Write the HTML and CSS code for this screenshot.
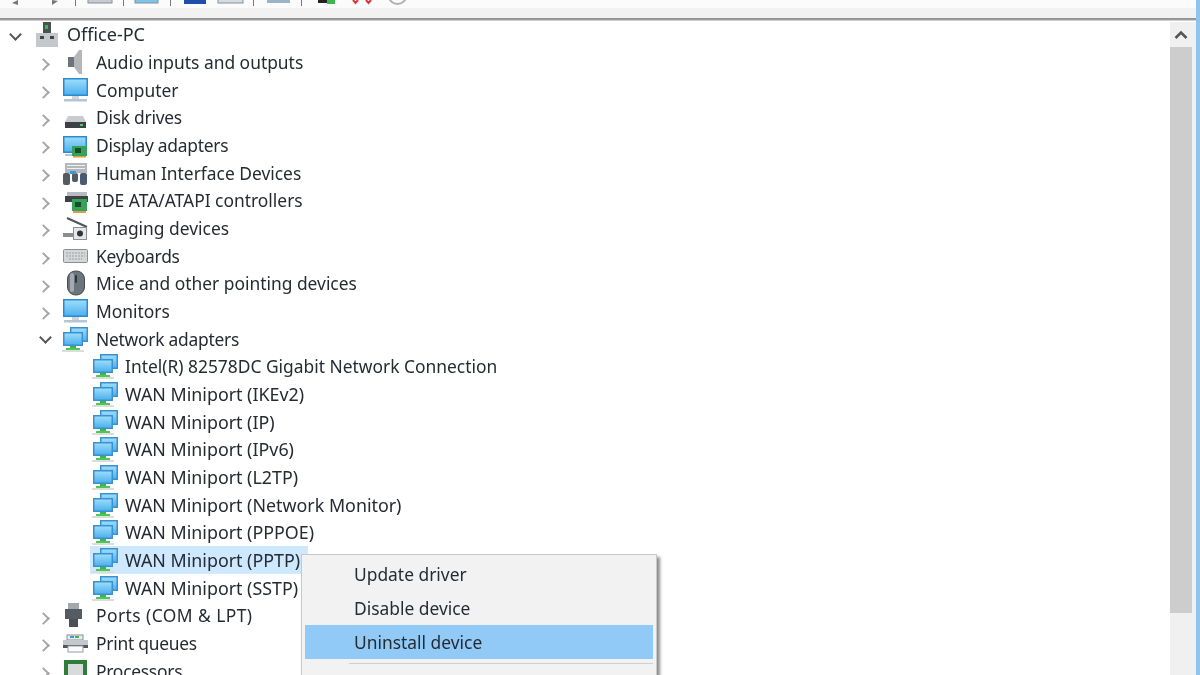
FILE: index.html
```html
<!DOCTYPE html>
<html lang="en">
<head>
<meta charset="utf-8"/>
<title>Device Manager</title>
<link rel="stylesheet" href="styles.css">
</head>
<body>
<svg class="defs" width="0" height="0">
  <defs>
    <linearGradient id="screen" x1="0" y1="0" x2="0" y2="1">
      <stop offset="0" stop-color="#9adcfa"/>
      <stop offset="1" stop-color="#4fb2ee"/>
    </linearGradient>
    <symbol id="net" viewBox="0 0 26 26">
      <rect x="8" y="1" width="18" height="15" fill="#3a90d0"/>
      <rect x="9.5" y="2.5" width="15" height="12" fill="url(#screen)"/>
      <rect x="1" y="6" width="20" height="14" fill="#3a90d0"/>
      <rect x="2.5" y="7.5" width="17" height="11" fill="url(#screen)"/>
      <rect x="8" y="20" width="6" height="2" fill="#3fb548"/>
      <rect x="4" y="22" width="14" height="2.5" fill="#4cc954"/>
      <rect x="0" y="24" width="22" height="2" fill="#dcdcdc"/>
    </symbol>
    <symbol id="monitor" viewBox="0 0 26 26">
      <rect x="1" y="1" width="25" height="18" fill="#2b8ad0"/>
      <rect x="2.5" y="2.5" width="22" height="15" fill="url(#screen)"/>
      <rect x="10" y="19" width="7" height="3" fill="#d0d4d8"/>
      <rect x="2" y="22" width="23" height="2.5" fill="#b4c6d4"/>
    </symbol>
    <symbol id="display" viewBox="0 0 26 26">
      <rect x="1" y="4" width="24" height="17" fill="#2b8ad0"/>
      <rect x="2.5" y="5.5" width="21" height="14" fill="url(#screen)"/>
      <rect x="3" y="22" width="10" height="2" fill="#b4c6d4"/>
      <rect x="10" y="14" width="15" height="10" fill="#38a058"/>
      <rect x="13" y="16" width="6" height="5" fill="#174f2a"/>
      <rect x="11" y="24" width="13" height="1.5" fill="#d8a040"/>
    </symbol>
    <symbol id="card" viewBox="0 0 26 26">
      <rect x="5" y="5" width="20" height="5" fill="#b8bcc0"/>
      <rect x="3" y="9" width="23" height="6" fill="#3c4248"/>
      <rect x="10" y="12" width="15" height="12" fill="#38a058"/>
      <rect x="13" y="15" width="6" height="5" fill="#174f2a"/>
      <rect x="11" y="24" width="13" height="2" fill="#d8a040"/>
    </symbol>
    <symbol id="print" viewBox="0 0 26 26">
      <rect x="5" y="5" width="16" height="5" fill="#e8ecef" stroke="#8a9096"/>
      <rect x="8" y="6" width="4" height="2" fill="#3a9ad8"/>
      <rect x="13" y="6" width="4" height="2" fill="#48b060"/>
      <rect x="1" y="10" width="25" height="5" fill="#c4c8cc"/>
      <rect x="1" y="15" width="25" height="3" fill="#50565c"/>
      <rect x="6" y="16" width="15" height="6" fill="#fafafa" stroke="#9aa0a6"/>
    </symbol>
  </defs>
</svg>

<div class="toolbar">
  <svg class="tool-icons" width="420" height="8" viewBox="0 0 420 8">
    <path d="M18 0 L12 3 L18 5 Z" class="arrow"/>
    <path d="M52 0 L58 1 L52 5 Z" class="arrow"/>
    <rect x="75" y="0" width="1" height="6" fill="#777"/>
    <rect x="88" y="-1" width="24" height="4" fill="#c8ccd0" stroke="#8a9096"/>
    <rect x="123" y="0" width="1" height="6" fill="#777"/>
    <rect x="135" y="-1" width="23" height="4" fill="#7cc4ee" stroke="#8a9096"/>
    <rect x="170" y="0" width="1" height="6" fill="#777"/>
    <rect x="184" y="0" width="22" height="4" fill="#1f4fa8"/>
    <rect x="218" y="-1" width="25" height="4" fill="#d4dce4" stroke="#8a9096"/>
    <rect x="253" y="0" width="1" height="6" fill="#777"/>
    <rect x="267" y="0" width="23" height="3" fill="#9cb4c8"/>
    <rect x="301" y="0" width="1" height="6" fill="#777"/>
    <rect x="318" y="0" width="9" height="3" fill="#222"/>
    <rect x="327" y="0" width="8" height="4" fill="#3cb84c"/>
    <path d="M353 0 L355.5 3 L358 0 M366 0 L368.5 3 L371 0" class="red-x"/>
    <circle cx="397.5" cy="-5" r="9" class="ring"/>
  </svg>
</div>

<div class="window">
  <div class="tree">
    <div class="row root"><span class="chev down"></span>
      <svg class="icon" width="24" height="26" viewBox="0 0 24 26">
        <rect x="8" y="0" width="8" height="12" fill="#4a5056"/>
        <rect x="10" y="3" width="3" height="4" fill="#3cb84c"/>
        <rect x="1" y="11" width="22" height="14" fill="#c4c8cc"/>
        <rect x="5" y="14" width="4" height="3" fill="#40464c"/>
        <rect x="15" y="14" width="4" height="3" fill="#40464c"/>
      </svg>
      <span class="label">Office-PC</span></div>

    <div class="row"><span class="chev"></span>
      <svg class="icon" width="26" height="26" viewBox="0 0 26 26">
        <rect x="6" y="8" width="6" height="10" fill="#6e747a"/>
        <path d="M12 8 L17 1 H20 V25 H17 L12 18 Z" fill="#b4b8bc"/>
      </svg>
      <span class="label">Audio inputs and outputs</span></div>
    <div class="row"><span class="chev"></span><svg class="icon" width="26" height="26"><use href="#monitor"/></svg><span class="label">Computer</span></div>
    <div class="row"><span class="chev"></span>
      <svg class="icon" width="26" height="26" viewBox="0 0 26 26">
        <path d="M6 12 H21 L24 18 H3 Z" fill="#c8ccd0"/>
        <rect x="3" y="18" width="21" height="6" fill="#3c4146"/>
        <rect x="18" y="20" width="3" height="2" fill="#4cd060"/>
      </svg>
      <span class="label tight">Disk drives</span></div>
    <div class="row"><span class="chev"></span><svg class="icon" width="26" height="26"><use href="#display"/></svg><span class="label tight">Display adapters</span></div>
    <div class="row"><span class="chev"></span>
      <svg class="icon" width="26" height="26" viewBox="0 0 26 26">
        <rect x="3" y="3" width="22" height="10" fill="#b4b8bc"/>
        <rect x="5" y="5" width="18" height="1" fill="#f0f0f0"/>
        <rect x="5" y="8" width="18" height="1" fill="#f0f0f0"/>
        <rect x="1" y="13" width="7" height="12" rx="2" fill="#555b62"/>
        <rect x="10" y="13" width="6" height="9" rx="2" fill="#555b62"/>
        <rect x="18" y="13" width="7" height="12" rx="2" fill="#4a5a70"/>
        <rect x="8" y="11" width="6" height="3" fill="#3a9ad8"/>
      </svg>
      <span class="label">Human Interface Devices</span></div>
    <div class="row"><span class="chev"></span><svg class="icon" width="26" height="26"><use href="#card"/></svg><span class="label">IDE ATA/ATAPI controllers</span></div>
    <div class="row"><span class="chev"></span>
      <svg class="icon" width="26" height="26" viewBox="0 0 26 26">
        <path d="M5 3 L25 12" stroke="#50565c" stroke-width="2"/>
        <rect x="1" y="18" width="10" height="4" fill="#8a8e92"/>
        <rect x="11.5" y="12.5" width="13" height="12" fill="#e4e6e8" stroke="#8a9096"/>
        <circle cx="18" cy="18.5" r="3" fill="#30353a"/>
      </svg>
      <span class="label">Imaging devices</span></div>
    <div class="row"><span class="chev"></span>
      <svg class="icon" width="26" height="26" viewBox="0 0 26 26">
        <rect x="1.5" y="6.5" width="24" height="13" rx="1" fill="#d4d6d8" stroke="#8a8e92"/>
        <path d="M4 10 H23 M4 13 H23 M7 16 H20" stroke="#9a9ea2" stroke-dasharray="2 1"/>
      </svg>
      <span class="label tight">Keyboards</span></div>
    <div class="row"><span class="chev"></span>
      <svg class="icon" width="26" height="26" viewBox="0 0 26 26">
        <rect x="5.5" y="1" width="17" height="24" rx="8" fill="#6c747c" stroke="#454b52"/>
        <rect x="8" y="3" width="4" height="19" rx="2" fill="#a4aab0"/>
        <rect x="13" y="5" width="2" height="8" rx="1" fill="#2e3338"/>
      </svg>
      <span class="label">Mice and other pointing devices</span></div>
    <div class="row"><span class="chev"></span><svg class="icon" width="26" height="26"><use href="#monitor"/></svg><span class="label">Monitors</span></div>
    <div class="row"><span class="chev down"></span><svg class="icon" width="26" height="26"><use href="#net"/></svg><span class="label tight">Network adapters</span></div>

    <div class="row child"><svg class="icon" width="26" height="26"><use href="#net"/></svg><span class="label">Intel(R) 82578DC Gigabit Network Connection</span></div>
    <div class="row child wan"><svg class="icon" width="26" height="26"><use href="#net"/></svg><span class="label">WAN Miniport (IKEv2)</span></div>
    <div class="row child wan"><svg class="icon" width="26" height="26"><use href="#net"/></svg><span class="label">WAN Miniport (IP)</span></div>
    <div class="row child wan"><svg class="icon" width="26" height="26"><use href="#net"/></svg><span class="label">WAN Miniport (IPv6)</span></div>
    <div class="row child wan"><svg class="icon" width="26" height="26"><use href="#net"/></svg><span class="label">WAN Miniport (L2TP)</span></div>
    <div class="row child wan"><svg class="icon" width="26" height="26"><use href="#net"/></svg><span class="label">WAN Miniport (Network Monitor)</span></div>
    <div class="row child wan"><svg class="icon" width="26" height="26"><use href="#net"/></svg><span class="label">WAN Miniport (PPPOE)</span></div>
    <div class="row child wan selected"><svg class="icon" width="26" height="26"><use href="#net"/></svg><span class="label">WAN Miniport (PPTP)</span></div>
    <div class="row child wan"><svg class="icon" width="26" height="26"><use href="#net"/></svg><span class="label">WAN Miniport (SSTP)</span></div>

    <div class="row"><span class="chev"></span>
      <svg class="icon" width="26" height="26" viewBox="0 0 26 26">
        <rect x="6" y="1" width="11" height="6" fill="#a4a8ac"/>
        <rect x="3" y="7" width="17" height="10" fill="#555b62"/>
        <rect x="7" y="17" width="9" height="8" fill="#4a5056"/>
      </svg>
      <span class="label wide">Ports (COM &amp; LPT)</span></div>
    <div class="row"><span class="chev"></span><svg class="icon" width="26" height="26"><use href="#print"/></svg><span class="label tight">Print queues</span></div>
    <div class="row"><span class="chev"></span>
      <svg class="icon" width="26" height="26" viewBox="0 0 26 26">
        <rect x="2" y="2" width="23" height="23" fill="#2e7d3a"/>
        <rect x="6" y="6" width="15" height="15" fill="#d8dadc"/>
      </svg>
      <span class="label tight">Processors</span></div>
  </div>

  <div class="scrollbar">
    <div class="scroll-up"><svg width="14" height="10" viewBox="0 0 14 10"><path d="M1.5 8 L7 2.5 L12.5 8" class="up"/></svg></div>
    <div class="thumb"></div>
  </div>
  <div class="edge"></div>

  <div class="menu">
    <div class="menu-item">Update driver</div>
    <div class="menu-item">Disable device</div>
    <div class="menu-item active">Uninstall device</div>
    <div class="menu-sep"></div>
  </div>
</div>
</body>
</html>
```

FILE: styles.css
```css
html, body {
  margin: 0;
  height: 675px;
  overflow: hidden;
  background: #fff;
}
body {
  font-family: "Noto Sans", "Open Sans", sans-serif;
  font-size: 17.4px;
  color: #262b31;
  display: flex;
  flex-direction: column;
  filter: blur(0.5px);
}
.defs {
  position: absolute;
}

/* toolbar stub at the top, cut off by the crop */
.toolbar {
  height: 8px;
  background: #fbfbfb;
  flex: none;
}
.tool-icons {
  display: block;
}
.arrow {
  fill: #777;
}
.red-x {
  fill: none;
  stroke: #d8383c;
  stroke-width: 2;
}
.ring {
  fill: none;
  stroke: #b0b0b0;
  stroke-width: 2;
}

.window {
  flex: 1;
  position: relative;
  display: flex;
  min-height: 0;
  background: linear-gradient(to bottom, #f2f2f2 0, #f2f2f2 10px, #8e8e8e 10px, #a0a0a0 12px, #fff 13px);
  padding-top: 14px;
}

.tree {
  flex: 1;
  background: #fff;
  padding-left: 8px;
  overflow: hidden;
}
.row {
  height: 27.68px;
  display: flex;
  align-items: center;
  white-space: nowrap;
}
.row .chev {
  width: 14px;
  margin-left: 32px;
  flex: none;
}
.row .chev::before {
  content: "";
  display: block;
  width: 7px;
  height: 7px;
  border-top: 2px solid #a6a6a6;
  border-right: 2px solid #a6a6a6;
  transform: translate(-1px, 3px) rotate(45deg);
}
.row .chev.down {
  margin-left: 0;
  width: 46px;
}
.row .chev.down::before {
  border-color: #555;
  margin-left: 33px;
  transform: translateY(-1px) rotate(135deg);
}
.row.root .chev.down {
  width: 27px;
}
.row.root .chev.down::before {
  margin-left: 3px;
}
.row .icon {
  flex: none;
  margin-left: 8px;
}
.row .label {
  margin-left: 8px;
  line-height: 24px;
}
.label.tight {
  letter-spacing: -0.25px;
}
.label.wide {
  letter-spacing: 0.45px;
}
.row.root {
  height: 26px;
  font-size: 18px;
}
.row.root .icon {
  margin-left: 0;
}
.row.root .label {
  margin-left: 8px;
  padding-bottom: 2px;
}
.row.child {
  padding-left: 84px;
  width: fit-content;
  padding-right: 8px;
}
.row.wan {
  font-size: 17.85px;
}
.row.child .icon {
  margin-left: 0;
}
.row.child .label {
  margin-left: 7px;
}
.row.selected {
  background: linear-gradient(#cde8ff, #cde8ff) no-repeat right / calc(100% - 82px) 100%;
}

.scrollbar {
  width: 26px;
  flex: none;
  margin-right: 4px;
  background: #f0f0f0;
}
.scroll-up {
  height: 25px;
  padding-right: 4px;
  display: flex;
  align-items: center;
  justify-content: center;
}
.up {
  fill: none;
  stroke: #555;
  stroke-width: 2.5;
}
.thumb {
  height: 566px;
  margin-right: 4px;
  background: #cdcdcd;
}
.edge {
  width: 4px;
  background: #8ec4f0;
  position: absolute;
  right: 0;
  top: -8px;
  bottom: 0;
}

.menu {
  position: absolute;
  left: 301px;
  top: 546px;
  width: 356px;
  height: 130px;
  box-sizing: border-box;
  padding: 2px 3px 0 3px;
  background: #f2f2f2;
  border: 1px solid #c8c8c8;
  box-shadow: 3px 3px 3px rgba(0, 0, 0, 0.45);
}
.menu-item {
  height: 34px;
  line-height: 34px;
  padding-left: 49px;
}
.menu-item.active {
  background: #91c9f7;
}
.menu-sep {
  height: 1px;
  margin: 4px 0 0 44px;
  background: #d0d0d0;
}
```
